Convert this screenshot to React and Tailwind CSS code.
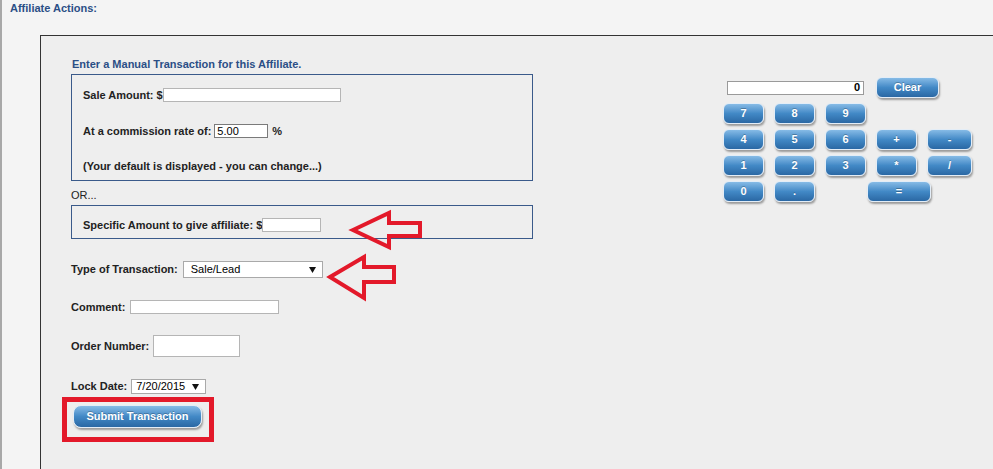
import React from "react";

const btn =
  "h-[21px] rounded-[6px] border border-[#e3edf7] bg-linear-to-b from-[#86bbe6] via-[#4289c6] to-[#2a68a4] text-white font-bold text-[11px] leading-none flex items-center justify-center shadow-[1px_2px_2px_rgba(0,0,0,0.35)] [text-shadow:0_-1px_0_rgba(0,0,0,0.25)]";

function CalcBtn({ label, w = "w-[41px]", extra = "" }) {
  return <div className={`${btn} ${w} ${extra}`}>{label}</div>;
}

function Arrow({ className }) {
  return (
    <svg className={className} width="7" height="6" viewBox="0 0 7 6">
      <polygon points="0,0 7,0 3.5,6" fill="#111" />
    </svg>
  );
}

export default function App() {
  return (
    <div className="relative w-[993px] h-[469px] overflow-hidden bg-[#f4f4f4] border-l-2 border-[#a8a8a8] font-['Liberation_Sans',Arial,sans-serif] text-[11px] text-[#222]">
      <div className="pl-[8px] pt-[2px] leading-[13px] font-bold text-[#2b4f86]">
        Affiliate Actions:
      </div>

      <div className="ml-[38px] mt-[20px] w-[1000px] h-[500px] border-t border-l border-[#333] bg-[#eeeeee] flex">
        {/* left form column */}
        <div className="ml-[30px] pt-[22px] w-[462px] shrink-0">
          <div className="pl-[1px] leading-[13px] font-bold text-[#2b4f86]">
            Enter a Manual Transaction for this Affiliate.
          </div>

          <div className="mt-[3px] h-[107px] border border-[#3a5a8a] pl-[11px] pt-[13px] font-bold">
            <div className="flex items-center h-[14px]">
              <span>Sale Amount: $</span>
              <div className="w-[178px] h-[14px] bg-white border border-[#b5b5b5]" />
            </div>
            <div className="flex items-center h-[14px] mt-[22px]">
              <span>At a commission rate of:</span>
              <div className="ml-[3px] w-[54px] h-[14px] bg-white border border-[#7a7a7a] flex items-center pl-[2px] text-[11px] font-normal text-black leading-none">
                5.00
              </div>
              <span className="ml-[4px]">%</span>
            </div>
            <div className="mt-[22px] leading-[13px]">
              (Your default is displayed - you can change...)
            </div>
          </div>

          <div className="mt-[8px] leading-[13px] text-[#222]">OR...</div>

          <div className="mt-[3px] h-[34px] border border-[#3a5a8a] pl-[11px] pt-[6px] flex items-center font-bold">
            <span>Specific Amount to give affiliate: $</span>
            <div className="w-[59px] h-[14px] bg-white border border-[#b5b5b5]" />
          </div>

          <div className="mt-[22px] flex items-center h-[17px] font-bold">
            <span>Type of Transaction:</span>
            <div className="ml-[5px] w-[140px] h-[17px] bg-white border border-[#a9a9a9] flex items-center justify-between pl-[7px] pr-[6px] font-normal text-[11px] text-black leading-none">
              <span>Sale/Lead</span>
              <Arrow />
            </div>
          </div>

          <div className="mt-[22px] flex items-center h-[14px] font-bold">
            <span>Comment:</span>
            <div className="ml-[5px] w-[149px] h-[14px] bg-white border border-[#b5b5b5]" />
          </div>

          <div className="mt-[21px] flex items-center h-[22px] font-bold">
            <span>Order Number:</span>
            <div className="ml-[4px] w-[87px] h-[22px] bg-white border border-[#b5b5b5]" />
          </div>

          <div className="mt-[22px] flex items-center h-[15px] font-bold">
            <span>Lock Date:</span>
            <div className="ml-[4px] w-[75px] h-[15px] bg-white border border-[#a9a9a9] flex items-center justify-between pl-[4px] pr-[6px] font-normal text-[11px] text-black leading-none">
              <span>7/20/2015</span>
              <Arrow />
            </div>
          </div>

          <div className="mt-[11px] ml-[2px] relative w-[129px]">
            <div className={`${btn} w-[129px] h-[23px] rounded-[8px] text-[11px]`}>
              Submit Transaction
            </div>
            <div className="absolute -left-[11px] -top-[8px] -right-[12px] -bottom-[14px] border-[5px] border-[#e3192a] pointer-events-none" />
          </div>
        </div>

        {/* calculator */}
        <div className="ml-[190px] pt-[41px] flex flex-col gap-[5px]">
          <div className="flex items-center h-[21px]">
            <div className="ml-[4px] w-[137px] h-[14px] bg-white border border-[#9a9a9a] flex items-center justify-end pr-[3px] text-[11px] font-bold text-black leading-none">
              0
            </div>
            <CalcBtn label="Clear" w="w-[63px]" extra="ml-[12px]" />
          </div>
          <div className="flex gap-[10px]">
            <CalcBtn label="7" />
            <CalcBtn label="8" />
            <CalcBtn label="9" />
          </div>
          <div className="flex gap-[10px]">
            <CalcBtn label="4" />
            <CalcBtn label="5" />
            <CalcBtn label="6" />
            <CalcBtn label="+" />
            <CalcBtn label="-" w="w-[45px]" />
          </div>
          <div className="flex gap-[10px]">
            <CalcBtn label="1" />
            <CalcBtn label="2" />
            <CalcBtn label="3" />
            <CalcBtn label="*" />
            <CalcBtn label="/" w="w-[45px]" />
          </div>
          <div className="flex">
            <CalcBtn label="0" />
            <CalcBtn label="." extra="ml-[10px]" />
            <CalcBtn label="=" w="w-[64px]" extra="ml-[52px]" />
          </div>
        </div>
      </div>

      {/* red annotation arrows */}
      <svg
        className="absolute left-0 top-0 pointer-events-none"
        width="993"
        height="469"
        viewBox="0 0 993 469"
      >
        <path
          d="M351,230 L387,213 L387,223 L418,223 L418,236 L387,236 L387,247 Z"
          fill="none"
          stroke="#e3192a"
          strokeWidth="4"
          strokeLinejoin="miter"
        />
        <path
          d="M328,277 L362,257 L362,267 L392,267 L392,282 L362,282 L362,298 Z"
          fill="none"
          stroke="#e3192a"
          strokeWidth="4"
          strokeLinejoin="miter"
        />
      </svg>
    </div>
  );
}
